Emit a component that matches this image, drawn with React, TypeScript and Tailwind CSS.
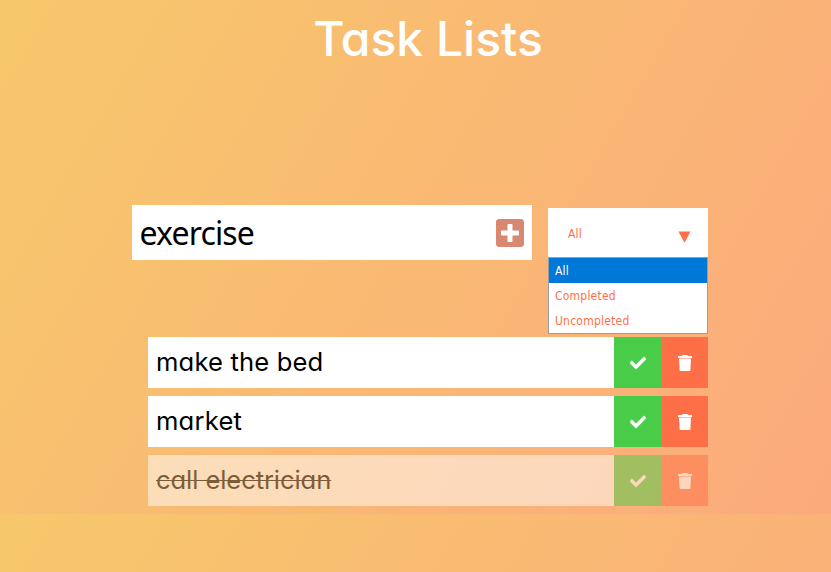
import { FaCheck, FaPlusSquare } from "react-icons/fa";

type Task = { name: string; done: boolean; spacing: string };

const tasks: Task[] = [
  { name: "make the bed", done: false, spacing: "tracking-[0.15px]" },
  { name: "market", done: false, spacing: "tracking-[0.2px]" },
  { name: "call electrician", done: true, spacing: "tracking-[-0.1px]" },
];

const filters = ["All", "Completed", "Uncompleted"];

function TrashIcon() {
  return (
    <svg width="14" height="16" viewBox="0 0 14 16" fill="currentColor">
      <path d="M4.6 0h4.8l.7 1H14v2H0V1h3.9zM1 3.6h12l-.6 11.7a.7.7 0 0 1-.7.7H2.3a.7.7 0 0 1-.7-.7z" />
    </svg>
  );
}

function TaskRow({ name, done, spacing }: Task) {
  return (
    <li className={`flex h-[51px] bg-white ${done ? "opacity-50" : ""}`}>
      <span className="flex flex-1 items-center px-2 pb-px text-[25.6px] leading-none text-black">
        <span className={`${spacing} ${done ? "line-through decoration-1" : ""}`}>{name}</span>
      </span>
      <button className="flex w-12 items-center justify-center bg-[#49cd49] text-base text-white">
        <FaCheck stroke="currentColor" strokeWidth={16} />
      </button>
      <button className="flex w-[46px] items-center justify-center bg-[#ff6f47] text-base text-white">
        <TrashIcon />
      </button>
    </li>
  );
}

function FilterSelect() {
  return (
    <div className="relative mt-[3px] h-[49px] w-40 bg-white font-['DejaVu_Sans_Condensed','DejaVu_Sans',sans-serif] text-xs tracking-[0.22px] text-[#ff6f47]">
      <div className="flex h-full items-center justify-between pr-[17px] pl-5">
        <span className="pt-0.5">All</span>
        <svg width="13" height="12" viewBox="0 0 13 12" className="mt-2" fill="currentColor">
          <path d="M0.5 0.4h12L6.5 11.8z" />
        </svg>
      </div>
      <ul className="absolute top-full left-0 z-10 w-40 border border-[#999da3] bg-white">
        {filters.map((f, i) => (
          <li key={f} className={`flex h-[25px] items-center px-1.5 ${i === 0 ? "bg-[#0078d7] text-white" : ""}`}>
            {f}
          </li>
        ))}
      </ul>
    </div>
  );
}

export default function App() {
  return (
    <div className="h-[572px] w-[831px] overflow-hidden bg-[linear-gradient(120deg,#f7c86b,#fca97d)] bg-[length:857px_514px] font-[Inter,sans-serif] [font-feature-settings:'cv11']">
      <header className="flex h-[80px] justify-center pl-[25px]">
        <h1 className="text-[48px] leading-[78px] font-medium text-white">Task Lists</h1>
      </header>
      <form className="mt-[125px] ml-[132px] flex gap-4">
        <div className="flex h-[55px] w-[400px] items-center justify-between bg-white pr-2 pl-[7.5px]">
          <span className="pt-px font-['Noto_Sans',sans-serif] text-[32px] leading-none tracking-[-0.85px] text-black">exercise</span>
          <FaPlusSquare className="w-7 text-[32px] text-[#d88771]" />
        </div>
        <FilterSelect />
      </form>
      <ul className="mt-[77px] ml-[148px] flex w-[560px] flex-col gap-2">
        {tasks.map((t) => (
          <TaskRow key={t.name} {...t} />
        ))}
      </ul>
    </div>
  );
}
